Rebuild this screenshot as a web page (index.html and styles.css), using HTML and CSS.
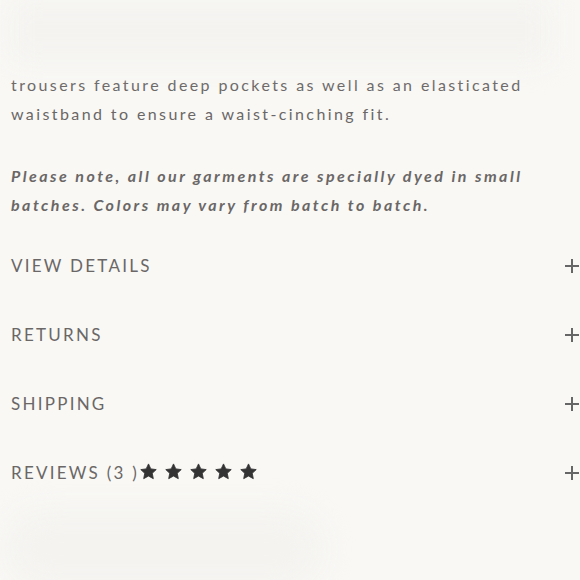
FILE: index.html
```html
<!DOCTYPE html>
<html lang="en">
<head>
  <meta charset="UTF-8">
  <meta name="viewport" content="width=device-width, initial-scale=1.0">
  <title>Product Description</title>
  <link rel="stylesheet" href="styles.css">
</head>
<body>
  <div class="ghost ghost-top"></div>
  <div class="product-info">
    <p class="desc">trousers feature deep pockets as well as an elasticated waistband to ensure a waist-cinching fit.</p>
    <p class="desc note">Please note, all our garments are specially dyed in small batches. Colors may vary from batch to batch.</p>

    <div class="accordion">
      <div class="acc-row">
        <span class="acc-title">View Details</span>
        <svg class="plus" width="14" height="14" viewBox="0 0 14 14"><path d="M7 0v14M0 7h14" stroke="currentColor" stroke-width="2"/></svg>
      </div>
      <div class="acc-row">
        <span class="acc-title">Returns</span>
        <svg class="plus" width="14" height="14" viewBox="0 0 14 14"><path d="M7 0v14M0 7h14" stroke="currentColor" stroke-width="2"/></svg>
      </div>
      <div class="acc-row">
        <span class="acc-title">Shipping</span>
        <svg class="plus" width="14" height="14" viewBox="0 0 14 14"><path d="M7 0v14M0 7h14" stroke="currentColor" stroke-width="2"/></svg>
      </div>
      <div class="acc-row">
        <span class="acc-title">Reviews (3 )</span>
        <span class="stars">
          <svg viewBox="0 0 24 24"><path d="M12 1.3L15.3 8.3 22.9 9.3 17.3 14.5 18.8 22.1 12 18.4 5.2 22.1 6.7 14.5 1.1 9.3 8.7 8.3z"/></svg>
          <svg viewBox="0 0 24 24"><path d="M12 1.3L15.3 8.3 22.9 9.3 17.3 14.5 18.8 22.1 12 18.4 5.2 22.1 6.7 14.5 1.1 9.3 8.7 8.3z"/></svg>
          <svg viewBox="0 0 24 24"><path d="M12 1.3L15.3 8.3 22.9 9.3 17.3 14.5 18.8 22.1 12 18.4 5.2 22.1 6.7 14.5 1.1 9.3 8.7 8.3z"/></svg>
          <svg viewBox="0 0 24 24"><path d="M12 1.3L15.3 8.3 22.9 9.3 17.3 14.5 18.8 22.1 12 18.4 5.2 22.1 6.7 14.5 1.1 9.3 8.7 8.3z"/></svg>
          <svg viewBox="0 0 24 24"><path d="M12 1.3L15.3 8.3 22.9 9.3 17.3 14.5 18.8 22.1 12 18.4 5.2 22.1 6.7 14.5 1.1 9.3 8.7 8.3z"/></svg>
        </span>
        <svg class="plus" width="14" height="14" viewBox="0 0 14 14"><path d="M7 0v14M0 7h14" stroke="currentColor" stroke-width="2"/></svg>
      </div>
    </div>
  </div>
  <div class="ghost ghost-bottom"></div>
</body>
</html>
```

FILE: styles.css
```css
html, body {
  margin: 0;
  background: #f9f8f5;
  overflow: hidden;
}
body {
  font-family: Lato, 'Open Sans', sans-serif;
  color: #6a6766;
}
.ghost {
  background: #f4f3f0;
  filter: blur(14px);
}
.ghost-top {
  height: 62px;
  margin: 0 30px 9px 10px;
}
.ghost-bottom {
  height: 80px;
  width: 320px;
  margin: 2px 0 0 4px;
  border-radius: 40px;
}
.product-info {
  padding: 0 1px 0 11px;
}
.desc {
  margin: 0 0 34px 0;
  font-size: 16px;
  line-height: 28.5px;
  letter-spacing: 2.4px;
}
.desc.note {
  font-style: italic;
  font-weight: 700;
  letter-spacing: 2.48px;
  margin-bottom: 12px;
}
.acc-row {
  display: flex;
  align-items: center;
  padding: 20px 0;
  height: 29px;
}
.acc-title {
  font-size: 17px;
  letter-spacing: 2.25px;
  text-transform: uppercase;
}
.plus {
  margin-left: auto;
  color: #666;
}
.stars {
  display: flex;
  gap: 8px;
  margin-left: 1px;
  margin-top: -3px;
}
.stars svg {
  width: 17px;
  height: 17px;
  fill: #333;
  stroke: #333;
  stroke-width: 1.2;
  stroke-linejoin: round;
}
```
